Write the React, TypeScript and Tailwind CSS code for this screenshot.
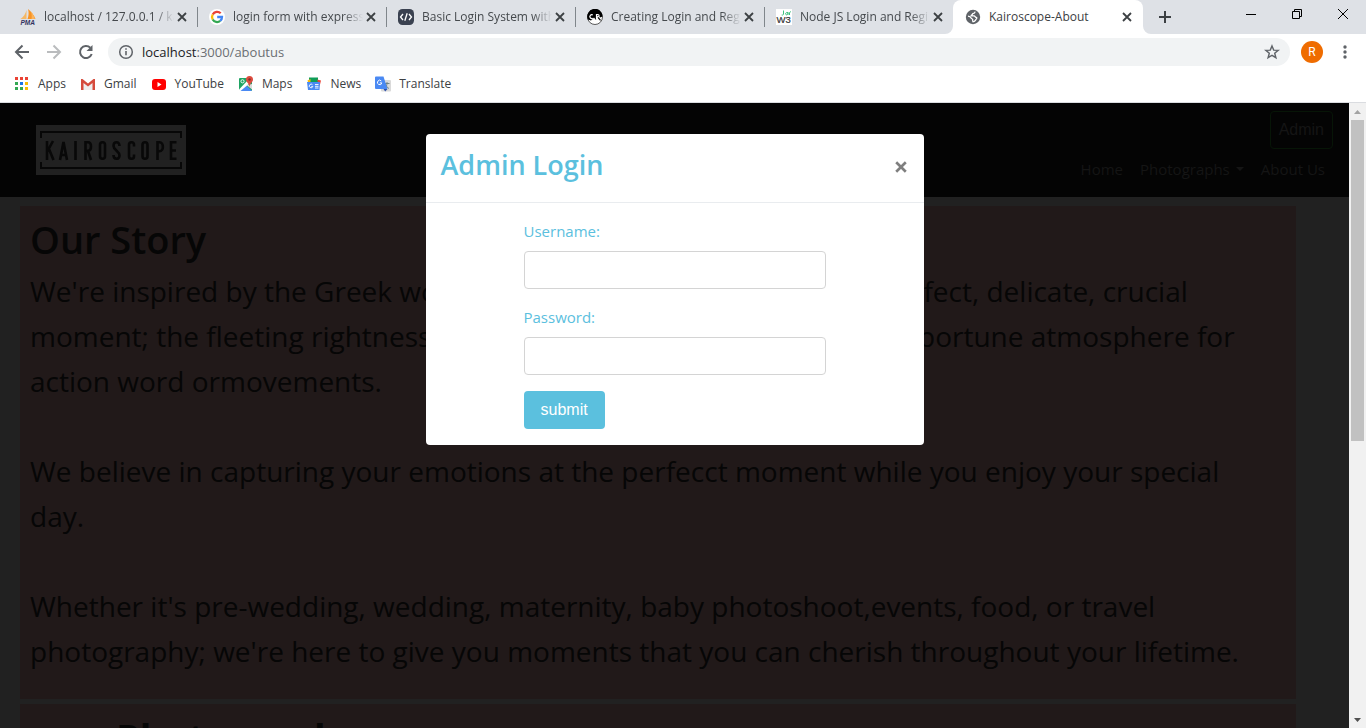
import type { ReactNode } from "react";

const uiFont = "font-['Open_Sans','Noto_Sans',sans-serif]";

function PmaIcon() {
  return (
    <svg viewBox="0 0 16 16" className="h-4 w-4 shrink-0">
      <path d="M6.500 1v9H.5C3.500 8 5.500 5 6.500 1z" fill="#f5b865" />
      <path d="M8 0c3 2.500 6 6 7.500 10H7.500C8.800 6.500 9 3.500 8 0z" fill="#f89425" />
      <path d="M11 2.500c1.800 2 3 4.500 3.800 7.500H11.500C12 7.500 11.700 5 11 2.500z" fill="#fbb45c" />
      <text x="0.500" y="15.500" fontSize="6.500" fontWeight="bold" fontStyle="italic" fill="#32325f" fontFamily="Liberation Sans">PMA</text>
    </svg>
  );
}

function GoogleIcon() {
  return (
    <svg viewBox="0 0 16 16" className="h-4 w-4 shrink-0">
      <circle cx="8" cy="8" r="8" fill="#fff" />
      <g fill="none" strokeWidth="2.300">
        <path d="M11.700 4.300A5 5 0 0 0 3.700 5.500" stroke="#ea4335" />
        <path d="M3.700 5.500a5 5 0 0 0 0 5" stroke="#fbbc05" />
        <path d="M3.700 10.500a5 5 0 0 0 7.500 1.400" stroke="#34a853" />
        <path d="M11.200 11.900A5 5 0 0 0 13 8H8.200" stroke="#4285f4" />
      </g>
    </svg>
  );
}

function CodeIcon() {
  return (
    <svg viewBox="0 0 16 16" className="h-4 w-4 shrink-0">
      <rect width="16" height="16" rx="4.500" fill="#3a4150" />
      <path d="M5 5L2.500 8 5 11M11 5l2.500 3L11 11M9.200 4.200l-2.400 7.600" fill="none" stroke="#fff" strokeWidth="1.300" />
    </svg>
  );
}

function CrIcon() {
  return (
    <svg viewBox="0 0 16 16" className="h-4 w-4 shrink-0">
      <circle cx="8" cy="8" r="7.500" fill="#fff" stroke="#333" strokeWidth=".8" />
      <path d="M.8 10.500A7.700 7.700 0 1 1 15.600 7.500l-2.600 1-2.500-2L9 11 7 8.500 4 11.500z" fill="#000" />
      <path d="M5.800 6a1.900 1.900 0 1 0 0 3.200M9.500 10.500V5.500h1.200a1.400 1.400 0 0 1 0 2.800H9.800" fill="none" stroke="#fff" strokeWidth="1.200" />
      <path d="M11 8.300l2.500 3" stroke="#000" strokeWidth="1.200" />
    </svg>
  );
}

function W3Icon() {
  return (
    <svg viewBox="0 0 16 16" className="h-4 w-4 shrink-0">
      <rect width="16" height="16" fill="#fff" />
      <path d="M7.500 1.500v3.500c0 1-.8 1.200-1.800 1M12 3.500c-2.500-.7-3 2-1.700 2.300 1 .2 1.700-.8 1.700-2.300v2.500M13.500 6V3.500c.3-.5.8-.8 1.500-.7" fill="none" stroke="#3fc380" />
      <text x="0.500" y="14" fontSize="9.500" fill="#333" stroke="#333" strokeWidth=".2" fontFamily="Liberation Sans">W3</text>
    </svg>
  );
}

function GlobeIcon() {
  return (
    <svg viewBox="0 0 16 16" className="h-4 w-4 shrink-0">
      <circle cx="8" cy="8" r="7.200" fill="#5f6368" />
      <path d="M9.800 2.600c.3 1.200-.5 1.700-1.500 1.800-.9.100-.7 1.200-1.500 1.400-.8.200-.9.900-.3 1.100h2.600c1 .1 1 1.400 1.900 1.500 1 .1 1 .9.400 1.500-.8.800-.9 1.900-2.100 2.500L8 12.700c-.5-.5-.3-1.300-.3-2.100 0-.9-1.500-.8-1.700-1.800-.2-.9-1.400-1.500-3-1.700" fill="none" stroke="#fff" strokeWidth="1.300" />
    </svg>
  );
}

function Cross({ className }: { className: string }) {
  return (
    <svg viewBox="0 0 10 10" className={className} fill="none" stroke="currentColor">
      <path d="M1 1l8 8M9 1L1 9" />
    </svg>
  );
}

const tabs: { title: string; icon: ReactNode; active?: boolean }[] = [
  { title: "localhost / 127.0.0.1 / ka", icon: <PmaIcon /> },
  { title: "login form with express", icon: <GoogleIcon /> },
  { title: "Basic Login System with", icon: <CodeIcon /> },
  { title: "Creating Login and Reg", icon: <CrIcon /> },
  { title: "Node JS Login and Regi", icon: <W3Icon /> },
  { title: "Kairoscope-About", icon: <GlobeIcon />, active: true },
];

function TabStrip() {
  return (
    <div className="flex h-[34px] shrink-0 bg-[#dee1e6] pl-2">
      {tabs.map((tab, i) => (
        <div
          key={tab.title}
          className={
            tab.active
              ? "relative flex h-full w-[190px] min-w-0 items-center rounded-t-lg bg-white pr-2 pl-3"
              : "flex h-full w-[189px] min-w-0 items-center pr-[7px] pl-3"
          }
        >
          {tab.icon}
          <span
            className={
              tab.active
                ? "ml-2 min-w-0 flex-1 overflow-hidden text-xs whitespace-nowrap text-[#3c4043]"
                : "ml-2 min-w-0 flex-1 overflow-hidden mask-r-from-85% text-xs whitespace-nowrap text-[#45494d]"
            }
          >
            {tab.title}
          </span>
          <button aria-label={"Close " + tab.title} className="flex h-4 w-4 shrink-0 items-center justify-center text-[#3c4043]">
            <Cross className="h-[10px] w-[10px] stroke-[1.800]" />
          </button>
          {!tab.active && <span className={i < 4 ? "-mr-2 ml-[7px] h-5 w-px shrink-0 bg-[#80868b]" : "-mr-2 ml-[7px] h-5 w-px shrink-0"} />}
          {tab.active && (
            <>
              <svg viewBox="0 0 8 8" className="absolute bottom-0 -left-2 h-2 w-2"><path d="M8 0v8H0a8 8 0 0 0 8-8z" fill="#fff" /></svg>
              <svg viewBox="0 0 8 8" className="absolute -right-2 bottom-0 h-2 w-2"><path d="M0 0v8h8a8 8 0 0 1-8-8z" fill="#fff" /></svg>
            </>
          )}
        </div>
      ))}
      <button aria-label="New tab" className="ml-3 flex w-5 items-center justify-center text-[#3c4043]">
        <svg viewBox="0 0 12 12" className="h-3 w-3" stroke="currentColor" strokeWidth="2"><path d="M6 0v12M0 6h12" /></svg>
      </button>
      <div className="ml-auto flex h-7">
        <button aria-label="Minimize" className="flex w-[46px] items-center justify-center">
          <svg viewBox="0 0 10 10" className="h-[10px] w-[10px]"><path d="M0 5.500h10" stroke="#000" /></svg>
        </button>
        <button aria-label="Restore" className="flex w-[46px] items-center justify-center">
          <svg viewBox="0 0 10 10" className="h-[10px] w-[10px]" fill="none" stroke="#000"><path d="M.5 2.500h7v7h-7zM2.500 2.500v-2h7v7h-2" /></svg>
        </button>
        <button aria-label="Close window" className="flex w-[46px] items-center justify-center">
          <svg viewBox="0 0 10 10" className="h-[10px] w-[10px]" stroke="#000"><path d="M0 0l10 10M10 0L0 10" /></svg>
        </button>
      </div>
    </div>
  );
}

function Toolbar() {
  return (
    <div className="flex h-9 shrink-0 items-center bg-white pl-3">
      <div className="flex gap-3">
        <button aria-label="Back" className="text-[#5f6368]">
          <svg viewBox="0 0 20 20" className="h-5 w-5" fill="none" stroke="currentColor" strokeWidth="2"><path d="M17 10H4.500M10.500 3.500L4 10l6.500 6.500" /></svg>
        </button>
        <button aria-label="Forward" className="text-[#babcbe]">
          <svg viewBox="0 0 20 20" className="h-5 w-5" fill="none" stroke="currentColor" strokeWidth="2"><path d="M3 10h12.500M9.500 3.500L16 10l-6.500 6.500" /></svg>
        </button>
        <button aria-label="Reload" className="text-[#5f6368]">
          <svg viewBox="0 0 20 20" className="h-5 w-5" fill="none" stroke="currentColor" strokeWidth="2"><path d="M15.700 12A6 6 0 1 1 14.300 5.800" /><path d="M16.500 3v6h-6z" fill="currentColor" stroke="none" /></svg>
        </button>
      </div>
      <div className="ml-3 flex h-7 flex-1 items-center rounded-full bg-[#f1f3f4] px-[10px]">
        <svg viewBox="0 0 16 16" className="h-4 w-4" fill="none" stroke="#5f6368"><circle cx="8" cy="8" r="6.300" strokeWidth="1.500" /><path d="M8 7v4.300M8 4.300v1.500" strokeWidth="1.600" /></svg>
        <span className="ml-2 flex-1 text-[13px] leading-5 text-[#6b6f73]">
          <span className="text-[#202124]">localhost</span>:3000/aboutus
        </span>
        <button aria-label="Bookmark this page">
          <svg viewBox="0 0 16 16" className="h-4 w-4" fill="none" stroke="#5f6368" strokeWidth="1.400"><path d="M8 1.900l1.700 4.200 4.500.3-3.500 2.900 1.200 4.400L8 11.300l-3.900 2.400 1.200-4.400L1.800 6.400l4.500-.3z" /></svg>
        </button>
      </div>
      <button aria-label="Profile" className="ml-[11px] h-[22px] w-[22px] rounded-full bg-[#ef6c00] font-['Roboto',sans-serif] text-xs text-white">R</button>
      <button aria-label="Menu" className="mr-[11px] ml-3 flex h-5 w-5 items-center justify-center">
        <svg viewBox="0 0 4 14" className="h-[14px] w-1" fill="#5f6368"><circle cx="2" cy="2" r="1.700" /><circle cx="2" cy="7" r="1.700" /><circle cx="2" cy="12" r="1.700" /></svg>
      </button>
    </div>
  );
}

const bookmarks: { name: string; icon: ReactNode }[] = [
  {
    name: "Apps",
    icon: (
      <svg viewBox="0 0 16 16" className="h-4 w-4">
        <path d="M1 1h3v3H1zM6 1h3v3H6zM11 1h3v3h-3z" fill="#ea4335" />
        <path d="M1 6h3v3H1zM1 11h3v3H1zM6 11h3v3H6z" fill="#34a853" />
        <path d="M6 6h3v3H6z" fill="#1a73e8" />
        <path d="M11 6h3v3h-3zM11 11h3v3h-3z" fill="#fbbc05" />
      </svg>
    ),
  },
  {
    name: "Gmail",
    icon: (
      <svg viewBox="0 0 16 16" className="h-4 w-4">
        <path d="M2 3h12v11H2z" fill="#eee" />
        <path d="M2 3h12L8 8z" fill="#fff" />
        <path d="M1 14V3h1.500L8 7.500 13.500 3H15v11h-2.500V7L8 10.500 3.500 7v7z" fill="#d54b3d" />
      </svg>
    ),
  },
  {
    name: "YouTube",
    icon: (
      <svg viewBox="0 0 16 16" className="h-4 w-4">
        <rect x="1" y="3" width="14" height="11" rx="3" fill="#f00" />
        <path d="M6.500 6v5l4-2.500z" fill="#fff" />
      </svg>
    ),
  },
  {
    name: "Maps",
    icon: (
      <svg viewBox="0 0 16 16" className="h-4 w-4">
        <rect x="1" y="2" width="13" height="13" rx="1" fill="#1fa463" />
        <path d="M2 15l6-6 6 6z" fill="#4a89f3" />
        <path d="M1 13.500L10 4l2 3-9.500 8H1z" fill="#fff" />
        <path d="M8.500 9l5.500-1v5.500z" fill="#dcdcdc" />
        <circle cx="4.500" cy="5.300" r="1.600" fill="none" stroke="#fff" strokeWidth=".9" />
        <path d="M11.500 0A3.500 3.500 0 0 1 15 3.500C15 6 12 7 11.500 11 11 7 8 6 8 3.500A3.500 3.500 0 0 1 11.500 0z" fill="#dd4b3e" />
        <circle cx="11.500" cy="3.500" r="1.200" fill="#822f2b" />
      </svg>
    ),
  },
  {
    name: "News",
    icon: (
      <svg viewBox="0 0 16 16" className="h-4 w-4">
        <path d="M3 1.500h9V7H3z" fill="#0f9d58" />
        <path d="M1.500 4.500l3-1.500V6H2z" fill="#fbbc05" />
        <path d="M11 3.500l4 1-1.500 6z" fill="#ea4335" />
        <path d="M1 6h13l-.5 8H2z" fill="#4a89f3" />
        <path d="M6.500 8.800a1.800 1.800 0 1 0 .3 1.700H5.300M9 8.500h3.500M9 10.300h3.500M9 12h3.500" fill="none" stroke="#fff" strokeWidth=".9" />
      </svg>
    ),
  },
  {
    name: "Translate",
    icon: (
      <svg viewBox="0 0 16 16" className="h-4 w-4">
        <rect x="6" y="4" width="10" height="11.500" rx="1" fill="#dadada" />
        <path d="M9.500 7.500h5M12 6v1.500c0 2-1 4-2.500 5M10.500 8.500c.8 2 2 3 3.500 4" fill="none" stroke="#6b8080" strokeWidth=".9" />
        <path d="M1 .5h7.500l4 12.500H1a1 1 0 0 1-1-1V1.500a1 1 0 0 1 1-1z" fill="#4a89f3" />
        <path d="M8.500 13h4l-2.300 2.500z" fill="#2c4fa8" />
        <path d="M6.300 5a2.200 2.200 0 1 0 .5 1.900H4.800" fill="none" stroke="#fff" />
      </svg>
    ),
  },
];

function BookmarkBar() {
  return (
    <nav className="flex h-[33px] shrink-0 items-center gap-[14px] border-b border-[#dadce0] bg-white pb-1 pl-[14px]">
      {bookmarks.map((b) => (
        <a key={b.name} href="#" className="flex items-center gap-2 text-xs text-[#3c4043]">
          {b.icon}
          {b.name}
        </a>
      ))}
    </nav>
  );
}

function SiteHeader() {
  return (
    <header className="flex items-start justify-between bg-[#040404] px-4 py-2 text-[#151515]">
      <svg viewBox="0 0 150 50" className="mt-[14px] ml-5 h-[50px] w-[150px]" role="img" aria-label="Kairoscope">
        <rect width="150" height="50" fill="#212121" />
        <path d="M5 13V7h140v6M5 37v6h140v-6" fill="none" stroke="#070707" strokeWidth="2" />
        <g fill="none" stroke="#080808" strokeWidth="2.600">
          <path d="M11 16v19M17 16l-6 11M13 24l4.500 11" />
          <path d="M24 35l3.500-18L31 35M25 30h5" />
          <path d="M39.500 16v19" />
          <path d="M49.500 35V17.300h2.500c4 0 4 8.400 0 8.400h-2.500M52 26l3 9" />
          <rect x="64" y="17.300" width="5" height="16.400" rx="2.500" />
          <path d="M83.500 21c0-5-6-5-6 0 0 4 6 5 6 9.500 0 4.500-6 4.500-6-.5" />
          <path d="M98 21.500v-1.700c0-3.400-5-3.400-5 0v11.400c0 3.400 5 3.400 5 0v-1.700" />
          <rect x="106.500" y="17.300" width="5" height="16.400" rx="2.500" />
          <path d="M121.500 35V17.300h2c4.500 0 4.500 9 0 9h-2" />
          <path d="M140.500 17.300H135v16.400h5.500M135 25.500h5" />
        </g>
      </svg>
      <div className="flex flex-col items-end">
        <button className="h-[38px] rounded border border-[#071507] px-2 font-['Liberation_Sans',sans-serif] text-base">Admin</button>
        <nav className="flex h-10 items-center gap-[17px] px-2 text-[15px]">
          <a href="#">Home</a>
          <a href="#" className="flex items-center gap-[6px]">
            Photographs
            <svg viewBox="0 0 8 4" className="h-1 w-2" fill="currentColor"><path d="M0 0h8L4 4z" /></svg>
          </a>
          <a href="#">About Us</a>
        </nav>
      </div>
    </header>
  );
}

function LoginDialog() {
  const inputClass = "mb-4 block h-[38px] w-full rounded border border-[#d4d4d4] px-3 outline-none";
  return (
    <div role="dialog" aria-labelledby="login-title" className="w-[498px] rounded bg-white text-[#5bc0de]">
      <div className="flex h-[69px] items-start justify-between border-b border-[#e9ecef] px-[15px] py-3">
        <h2 id="login-title" className="text-[27px] leading-[38px] font-semibold">Admin Login</h2>
        <button aria-label="Close" className="flex h-[42px] w-4 items-center justify-center text-[#7f7f7f]">
          <Cross className="h-3 w-3 stroke-[2.200]" />
        </button>
      </div>
      <form className="px-[98px] py-4 text-[15px] leading-6" onSubmit={(e) => e.preventDefault()}>
        <label htmlFor="username" className="mb-2 block">Username:</label>
        <input id="username" type="text" className={inputClass} />
        <label htmlFor="password" className="mb-2 block">Password:</label>
        <input id="password" type="password" className={inputClass} />
        <button type="submit" className="block h-[38px] rounded bg-[#5bc0de] px-[17px] font-['Liberation_Sans',sans-serif] text-base text-white">submit</button>
      </form>
    </div>
  );
}

function Scrollbar() {
  return (
    <div className="flex w-[17px] shrink-0 flex-col items-center bg-[#f1f1f1]">
      <div className="flex h-[17px] items-center"><svg viewBox="0 0 7 4" className="h-1 w-[7px]"><path d="M0 4l3.500-4L7 4z" fill="#a3a3a3" /></svg></div>
      <div className="h-[321px] w-[13px] bg-[#c1c1c1]" />
      <div className="mt-auto flex h-[17px] items-center"><svg viewBox="0 0 7 4" className="h-1 w-[7px]"><path d="M0 0l3.500 4L7 0z" fill="#505050" /></svg></div>
    </div>
  );
}

export default function App() {
  return (
    <div className={"flex h-screen flex-col overflow-hidden " + uiFont}>
      <TabStrip />
      <Toolbar />
      <BookmarkBar />
      <div className="flex min-h-0 flex-1">
        <div className="relative min-w-0 flex-1 overflow-hidden bg-[#212121] text-[#060606]">
          <SiteHeader />
          <main className="flex flex-col gap-[5px] pt-[9px] pr-[53px] pl-5">
            <section className="bg-[#211919] px-[10px] pt-[9px] pb-[25px]">
              <h1 className="mb-[6px] text-[38px] leading-[48px] font-semibold">Our Story</h1>
              <p className="text-[28px] leading-[45px]">
                We're inspired by the Greek word 'Kairos' which is defined as the perfect, delicate, crucial
                <br />
                moment; the fleeting rightness of time and place that creates the opportune atmosphere for
                <br />
                action word ormovements.
              </p>
              <p className="mt-[45px] text-[28px] leading-[45px]">
                We believe in capturing your emotions at the perfecct moment while you enjoy your special
                <br />
                day.
              </p>
              <p className="mt-[45px] text-[28px] leading-[45px]">
                Whether it's pre-wedding, wedding, maternity, baby photoshoot,events, food, or travel
                <br />
                photography; we're here to give you moments that you can cherish throughout your lifetime.
              </p>
            </section>
            <section className="bg-[#211919] px-24 pt-[9px] pb-[25px]">
              <h2 className="text-[38px] leading-[48px] font-bold">Photographer</h2>
            </section>
          </main>
          <div className="absolute inset-0 flex items-start justify-center pt-[31px]">
            <LoginDialog />
          </div>
        </div>
        <Scrollbar />
      </div>
    </div>
  );
}
